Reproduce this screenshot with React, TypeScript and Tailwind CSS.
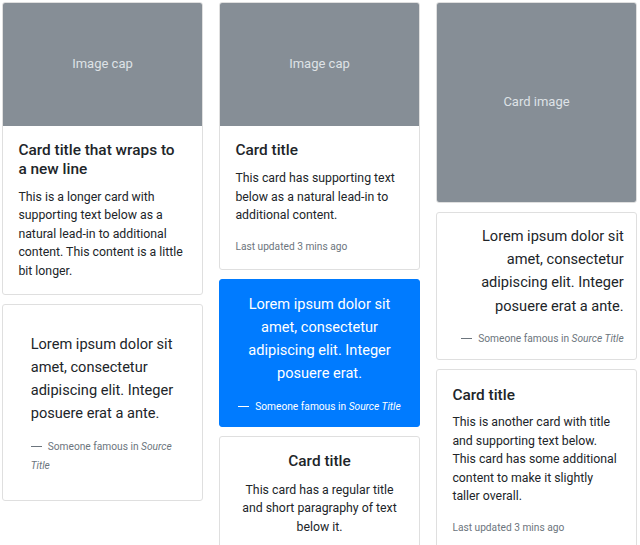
import React from "react";

const Cap = ({ h, label, rounded }: { h: string; label: string; rounded?: boolean }) => (
  <div
    className={`${h} bg-[#868e96] text-[#dee2e6] text-[13px] flex items-center justify-center ${
      rounded ? "rounded-[2px]" : "rounded-t-[2px]"
    }`}
  >
    {label}
  </div>
);

const Card = ({ children, className = "" }: { children: React.ReactNode; className?: string }) => (
  <div className={`border border-[#dfdfdf] rounded-[3px] bg-white ${className}`}>{children}</div>
);

const Title = ({ children }: { children: React.ReactNode }) => (
  <h5 className="text-[15.4px] leading-[18.5px] font-medium mb-[9.2px] text-[#212529]">{children}</h5>
);

const Footer = ({ white, children }: { white?: boolean; children: React.ReactNode }) => (
  <footer className={`text-[12.3px] leading-[18.5px] ${white ? "text-white" : "text-[#6c757d]"}`}>
    <span className="inline-block w-[11px] h-[1px] bg-current align-middle mr-[6px]" />
    <small className="text-[10.2px]">{children}</small>
  </footer>
);

const Quote = ({ children }: { children: React.ReactNode }) => (
  <p className="text-[14.6px] leading-[23.1px] mb-[11.5px]">{children}</p>
);

export default function App() {
  return (
    <div className="w-[640px] h-[545px] overflow-hidden bg-white font-[Roboto,'Liberation_Sans',sans-serif] text-[#212529] text-[12.3px] leading-[18.5px]">
      <div className="flex gap-[16px] pl-[2px] pt-[2px]">
        {/* Column 1 */}
        <div className="w-[201px] flex flex-col gap-[9px]">
          <Card>
            <Cap h="h-[123px]" label="Image cap" />
            <div className="px-[15.4px] pt-[15.4px] pb-[14px]">
              <Title>Card title that wraps to a new line</Title>
              <p>
                This is a longer card with supporting text below as a natural lead-in to additional content. This
                content is a little bit longer.
              </p>
            </div>
          </Card>
          <Card className="px-[12.3px] pt-[12.3px] pb-[10px]">
            <blockquote className="px-[15.4px] pt-[15.4px] pb-[14px]">
              <Quote>Lorem ipsum dolor sit amet, consectetur adipiscing elit. Integer posuere erat a ante.</Quote>
              <Footer>
                Someone famous in <cite>Source Title</cite>
              </Footer>
            </blockquote>
          </Card>
        </div>

        {/* Column 2 */}
        <div className="w-[201px] flex flex-col gap-[9px]">
          <Card>
            <Cap h="h-[123px]" label="Image cap" />
            <div className="px-[15.4px] pt-[15.4px] pb-[13px]">
              <Title>Card title</Title>
              <p className="mb-[12.3px]">
                This card has supporting text below as a natural lead-in to additional content.
              </p>
              <p>
                <small className="text-[10.2px] text-[#6c757d]">Last updated 3 mins ago</small>
              </p>
            </div>
          </Card>
          <div className="rounded-[3px] bg-[#007bff] border border-[#007bff] text-white text-center px-[12.3px] pt-[12.3px] pb-[10px]">
            <blockquote>
              <Quote>Lorem ipsum dolor sit amet, consectetur adipiscing elit. Integer posuere erat.</Quote>
              <Footer white>
                Someone famous in <cite>Source Title</cite>
              </Footer>
            </blockquote>
          </div>
          <Card className="text-center">
            <div className="px-[15.4px] pt-[15.4px] pb-[14px]">
              <h5 className="text-[15.4px] leading-[18.5px] font-medium mb-[10px] text-[#212529]">Card title</h5>
              <p className="mb-[12.3px]">This card has a regular title and short paragraphy of text below it.</p>
              <p>
                <small className="text-[10.2px] text-[#6c757d]">Last updated 3 mins ago</small>
              </p>
            </div>
          </Card>
        </div>

        {/* Column 3 */}
        <div className="w-[201px] flex flex-col gap-[9px]">
          <Card>
            <Cap h="h-[199px]" label="Card image" rounded />
          </Card>
          <Card className="px-[12.3px] pt-[12.3px] pb-[10px] text-right">
            <blockquote>
              <Quote>Lorem ipsum dolor sit amet, consectetur adipiscing elit. Integer posuere erat a ante.</Quote>
              <Footer>
                Someone famous in <cite>Source Title</cite>
              </Footer>
            </blockquote>
          </Card>
          <Card>
            <div className="px-[15.4px] pt-[16px] pb-[14px]">
              <Title>Card title</Title>
              <p className="mb-[12.3px]">
                This is another card with title and supporting text below. This card has some additional content to
                make it slightly taller overall.
              </p>
              <p>
                <small className="text-[10.2px] text-[#6c757d]">Last updated 3 mins ago</small>
              </p>
            </div>
          </Card>
        </div>
      </div>
    </div>
  );
}
